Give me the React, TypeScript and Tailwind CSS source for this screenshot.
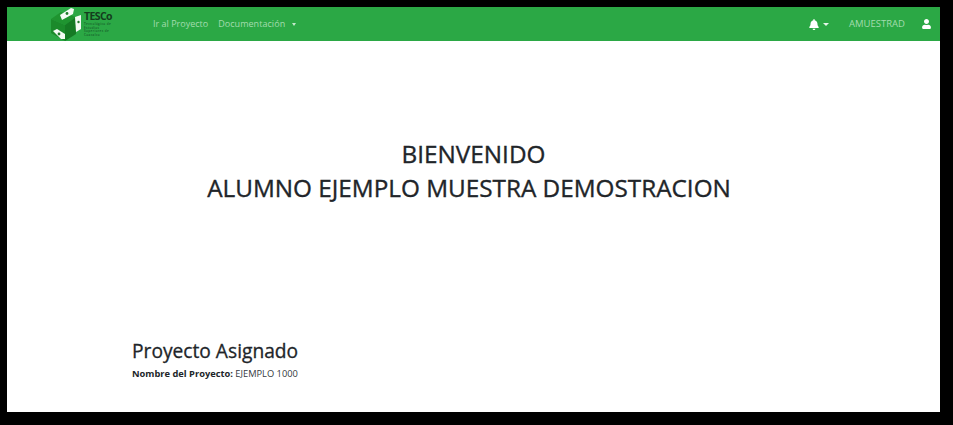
import React from 'react'

function TescoLogo() {
  return (
    <div className="flex items-center gap-[3px]">
      <svg width="30" height="33" viewBox="0 0 30 33" className="block">
        <path d="M0 11 L10 4 L25 9 L14 17 Z" fill="#1f9430" />
        <path d="M0 11 L14 17 L14 33 L0 25 Z" fill="#1b8a2b" />
        <path d="M14 17 L25 9 L25 26 L14 33 Z" fill="#157a24" />
        <path d="M9 7 L20 0 L23 1 L22 6 L11 12 Z" fill="#f4fbf5" />
        <circle cx="16" cy="5.500" r="1.400" fill="#1f7a2a" />
        <path d="M24 9 L30 7 L30 21 L25 24 Z" fill="#f4fbf5" />
        <circle cx="27.500" cy="14" r="1.200" fill="#1f7a2a" />
        <path d="M2 23 L6 21 L14 26 L14 31 L10 31 Z" fill="#f4fbf5" />
        <circle cx="8" cy="26" r="1.400" fill="#1f7a2a" />
      </svg>
      <div className="flex flex-col">
        <span className="text-[10.500px] leading-[11px] font-bold text-[#143d1d] tracking-[-0.6px]">TESCo</span>
        <span className="mt-[1px] text-[3px] leading-[3.500px] font-semibold text-[#17602a] w-[33px] tracking-[0.4px]">
          Tecnológico de Estudios Superiores de Coacalco
        </span>
      </div>
    </div>
  )
}

export default function App() {
  return (
    <div className="w-[953px] h-[425px] bg-black pt-[7px] pl-[7px] pr-[13px] pb-[13px] font-['Open_Sans',sans-serif] overflow-hidden">
      <div className="h-full bg-white flex flex-col">
        <nav className="h-[34px] bg-[#2ba845] flex items-center pl-[44px] pr-[9px]">
          <TescoLogo />
          <div className="flex items-center gap-[10px] ml-[36px] text-[9px] text-[#a3dcae]">
            <span>Ir al Proyecto</span>
            <span className="flex items-center gap-[7px] tracking-[0.05px]">
              Documentación
              <span className="w-0 h-0 border-x-[2.500px] border-x-transparent border-t-[3px] border-t-[#c4e8cb]" />
            </span>
          </div>
          <div className="ml-auto flex items-center text-white">
            <svg width="10" height="11" viewBox="0 0 448 512" fill="currentColor">
              <path d="M224 512c35.300 0 64-28.700 64-64H160c0 35.300 28.700 64 64 64zm215.400-149.700c-19.300-20.800-55.500-52-55.500-154.300 0-77.700-54.500-139.900-127.900-155.200V32c0-17.700-14.300-32-32-32s-32 14.300-32 32v20.800C118.600 68.100 64.100 130.300 64.100 208c0 102.300-36.200 133.500-55.500 154.300-6 6.400-8.700 14.100-8.600 21.700.1 16.400 13 32 32.100 32h383.800c19.100 0 32-15.600 32.100-32 .1-7.600-2.600-15.300-8.600-21.700z" />
            </svg>
            <span className="ml-[4px] w-0 h-0 border-x-[3px] border-x-transparent border-t-[3px] border-t-[#e6f5e9]" />
            <span className="ml-[20px] text-[9.500px] text-[#a3dcae]">AMUESTRAD</span>
            <svg className="ml-[17px]" width="9" height="10" viewBox="0 0 448 512" fill="currentColor">
              <path d="M224 256c70.700 0 128-57.300 128-128S294.700 0 224 0 96 57.300 96 128s57.300 128 128 128zm89.600 32h-16.700c-22.200 10.200-46.900 16-72.900 16s-50.600-5.800-72.900-16h-16.700C60.200 288 0 348.200 0 422.400V464c0 26.500 21.500 48 48 48h352c26.500 0 48-21.500 48-48v-41.600c0-74.200-60.200-134.400-134.400-134.400z" />
            </svg>
          </div>
        </nav>

        <main className="flex-1 flex flex-col">
          <div className="mt-[96px] text-center text-[24.300px] leading-[34px] text-[#212529] [-webkit-text-stroke:0.35px_#212529]">
            <h1>BIENVENIDO</h1>
            <h1 className="pr-[9px]">ALUMNO EJEMPLO MUESTRA DEMOSTRACION</h1>
          </div>
          <div className="mt-[133px] pl-[125px] text-[#212529]">
            <h2 className="text-[19.200px] leading-[26px] [-webkit-text-stroke:0.3px_#212529]">Proyecto Asignado</h2>
            <p className="mt-[4px] text-[9.300px] leading-[12px] text-[#343a40]">
              <strong className="font-bold text-[#212529]">Nombre del Proyecto:</strong> EJEMPLO 1000
            </p>
          </div>
        </main>
      </div>
    </div>
  )
}
